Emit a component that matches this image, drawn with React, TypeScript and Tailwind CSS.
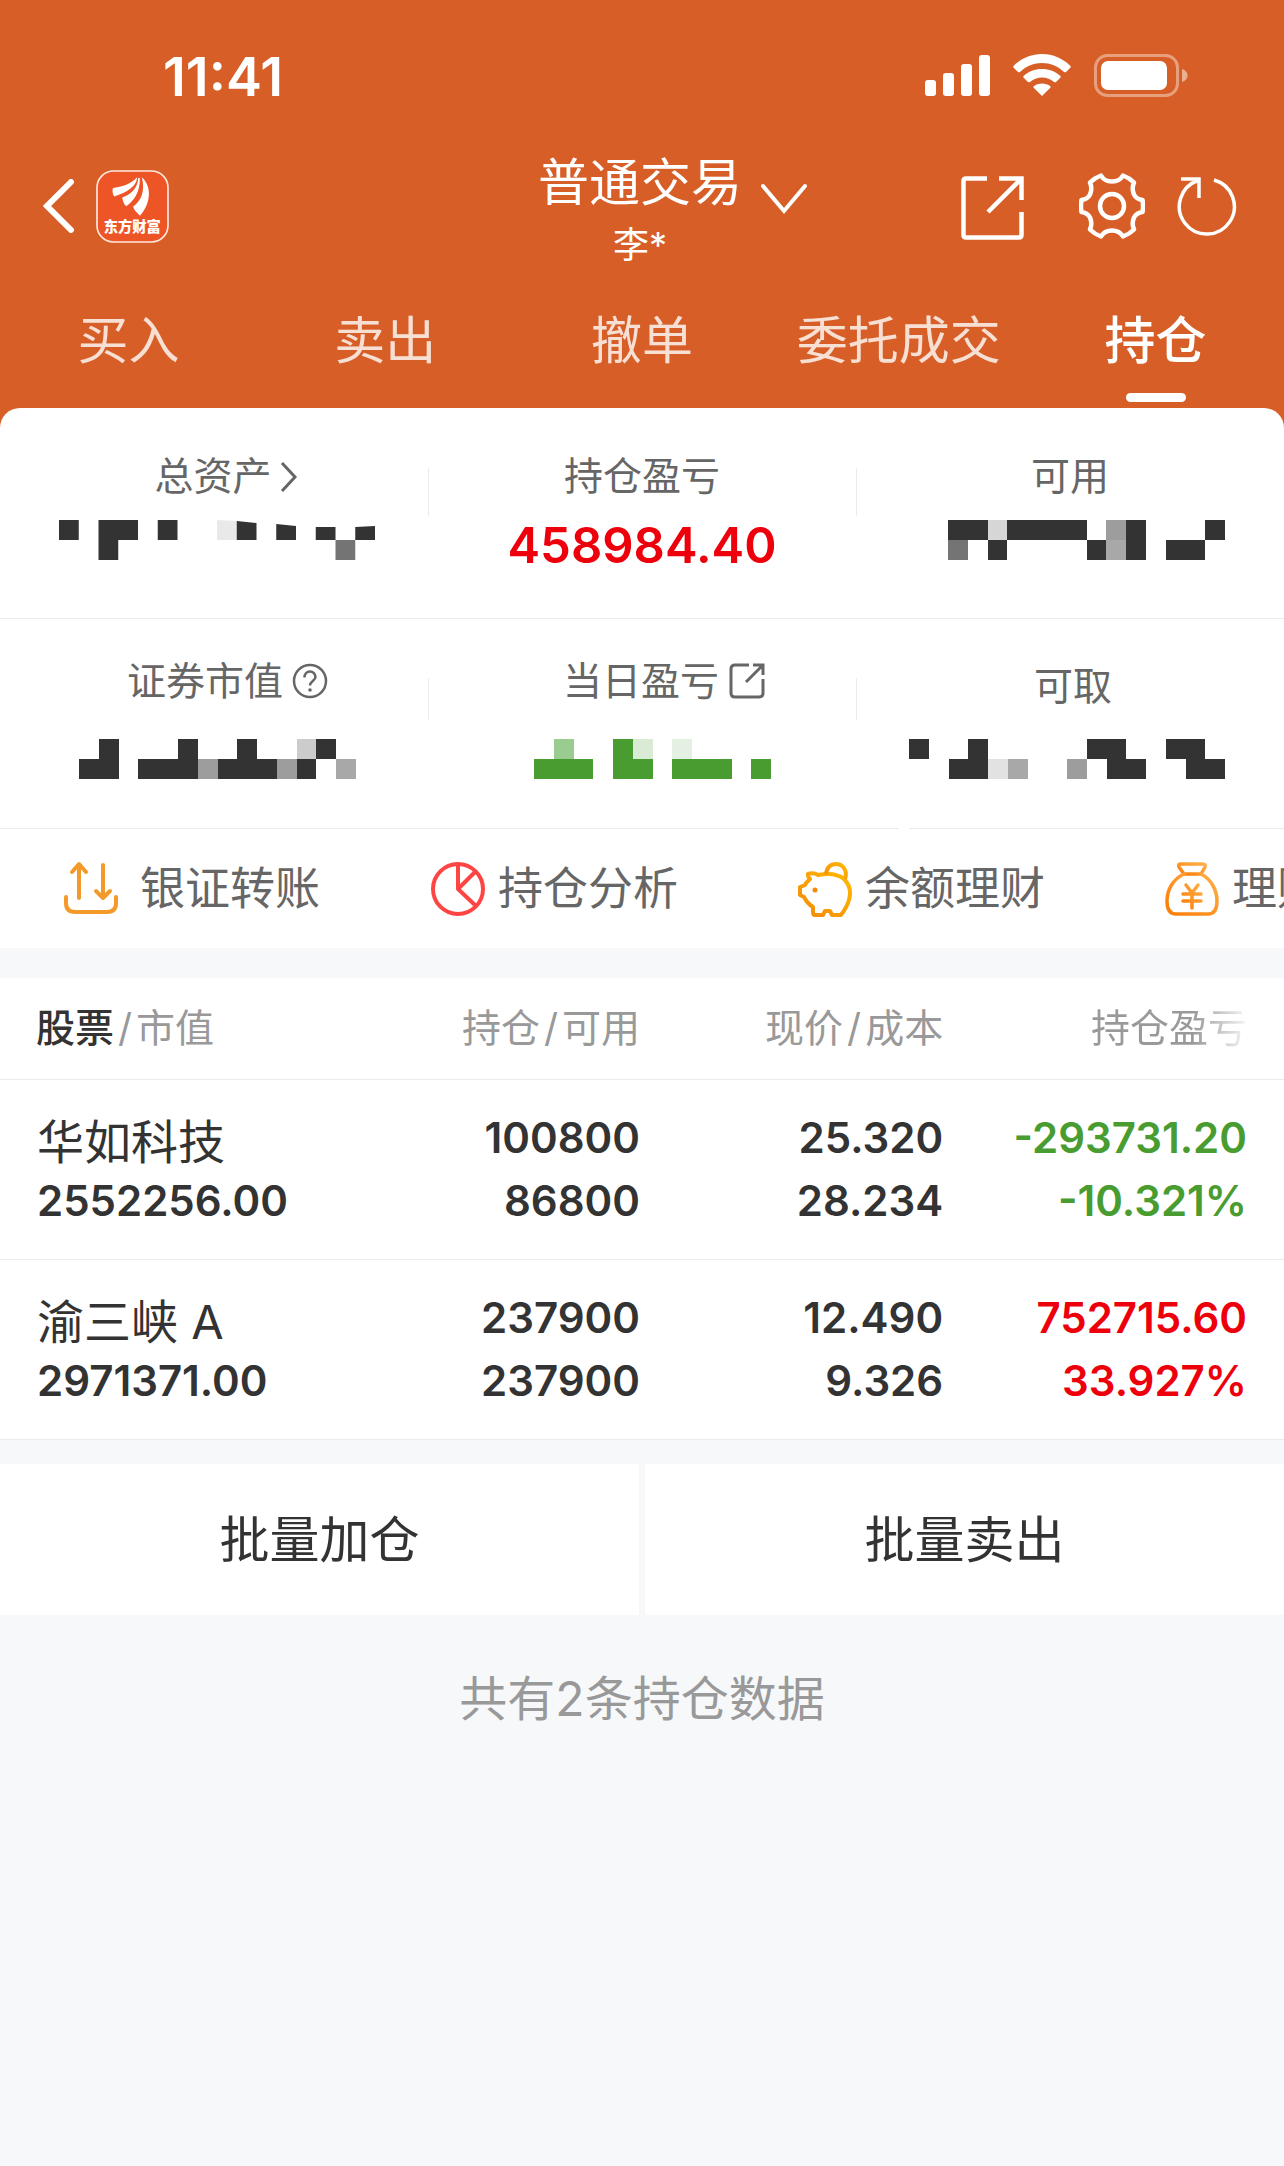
import React from "react";

type Cell = [col: number, row: number, span: number, fill: string];

const INK = "#333333";
const LEAF = "#499c2f";

function Mosaic({ cols, cells, className, label }: { cols: number; cells: Cell[]; className: string; label: string }) {
  return (
    <svg viewBox={`0 0 ${cols * 20} 40`} preserveAspectRatio="none" shapeRendering="crispEdges" role="img" aria-label={label} className={className}>
      {cells.map(([c, r, n, fill], i) => (
        <rect key={i} x={c * 20} y={r * 20} width={n * 20} height={20} fill={fill} />
      ))}
    </svg>
  );
}

function StatusBar() {
  return (
    <div className="flex h-[136px] items-center justify-between pt-[18px] pr-[96px] pl-[163px]">
      <span className="text-[54px] leading-[60px] font-semibold">11:41</span>
      <div className="mb-1 flex items-center gap-[23px]">
        <svg viewBox="0 0 65 42" className="h-[42px] w-[65px]" fill="currentColor">
          <rect x="0" y="26" width="11" height="16" rx="3" />
          <rect x="18" y="19" width="11" height="23" rx="3" />
          <rect x="36" y="10" width="11" height="32" rx="3" />
          <rect x="54" y="1" width="11" height="41" rx="3" />
        </svg>
        <svg viewBox="0 0 58 42" className="h-[42px] w-[58px]" fill="currentColor">
          <path d="M29 0C40 0 50 4.500 57.500 12Q58 13 57.500 13.500L53 18Q52 18.500 51 18C45 12 37 9 29 9S13 12 7 18Q6 18.500 5 18L.5 13.500Q0 13 .5 12C8 4.500 18 0 29 0Z" />
          <path d="M29 15C36 15 42.500 17.500 47.500 22Q48 23 47.500 23.500L43 28Q42 28.500 41 28C37.500 25 33.500 23.500 29 23.500S20.500 25 17 28Q16 28.500 15 28L10.500 23.500Q10 23 10.500 22C15.500 17.500 22 15 29 15Z" />
          <path d="M29 29.500C32 29.500 35 30.500 37.300 32.300Q38 33 37.300 33.800L29 42L20.700 33.800Q20 33 20.700 32.300C23 30.500 26 29.500 29 29.500Z" />
        </svg>
        <svg viewBox="0 0 94 43" className="h-[43px] w-[94px]">
          <rect x="1.500" y="1.500" width="82" height="40" rx="12" fill="none" stroke="#fff" strokeOpacity=".4" strokeWidth="3" />
          <rect x="7" y="7" width="66" height="29" rx="7" fill="#fff" />
          <path d="M88 15C91.500 16 93.500 18.500 93.500 21.500S91.500 27 88 28Z" fill="#fff" fillOpacity=".5" />
        </svg>
      </div>
    </div>
  );
}

function Logo() {
  return (
    <svg viewBox="48 44 220 220" className="size-[73px]" role="img" aria-label="东方财富">
      <rect x="51" y="47" width="214" height="214" rx="50" fill="#ee5526" stroke="#ffe9df" strokeWidth="5" />
      <path fill="#fff" d="M99 98C125 95 152 88 172 66C170 95 142 110 103 124C97 115 97 106 99 98Z" />
      <path fill="#fff" d="M175 68C175 98 152 118 127 127C129 139 132 147 139 153C160 138 182 112 180 67Z" />
      <path fill="#fff" d="M186 66C204 82 211 106 206 131C202 153 193 167 181 182C173 173 162 166 160 154C184 137 197 108 186 66Z" />
      <text x="157" y="231" textAnchor="middle" fontSize="43" fontWeight="900" fill="#fff" fontFamily="'Noto Sans CJK SC', sans-serif">
        东方财富
      </text>
    </svg>
  );
}

function NavBar() {
  return (
    <div className="grid h-[140px] grid-cols-[1fr_auto_1fr] items-center pr-[47px] pl-[43px]">
      <div className="flex items-center gap-[21px]">
        <button type="button" aria-label="返回">
          <svg viewBox="0 0 32 54" className="h-[54px] w-[32px]" fill="none" stroke="currentColor" strokeWidth="6" strokeLinecap="round">
            <path d="M28 3L4 27L28 51" />
          </svg>
        </button>
        <button type="button">
          <Logo />
        </button>
      </div>
      <button type="button" className="relative pt-4 text-center">
        <span className="block text-[51px] leading-[62px]">普通交易</span>
        <span className="block text-[36px] leading-[62px]">李*</span>
        <svg viewBox="0 0 46 32" className="absolute top-[47px] left-full ml-[19px] h-[32px] w-[46px]" fill="none" stroke="currentColor" strokeWidth="4" strokeLinecap="round">
          <path d="M2 3L23 28L44 3" />
        </svg>
      </button>
      <div className="flex items-center justify-end">
        <button type="button" aria-label="分享" className="mt-[3px] mr-[54px]">
          <svg viewBox="0 0 64 64" className="size-[64px]" fill="none" stroke="currentColor" strokeWidth="4.500">
            <path d="M26 2.500H5Q2.500 2.500 2.500 5V59Q2.500 61.500 5 61.500H58Q60.500 61.500 60.500 59V36" />
            <path d="M38 2.500H60.500V24M60.500 2.500L27 36" />
          </svg>
        </button>
        <button type="button" aria-label="设置" className="mr-[32px]">
          <svg viewBox="0 0 66 66" className="size-[66px]" fill="none" stroke="currentColor" strokeWidth="4.500" strokeLinejoin="round">
            <path d="M22 2.500C24 6 28 8.500 33 8.500S42 6 44 2.500C48 4 52 6.500 55 9.500C53 14 53.500 18 55 21.500C56.500 24.500 59.500 26.500 63.500 27C64.200 31 64.200 35 63.500 39C59.500 39.500 56.500 41.500 55 44.500C53.500 48 53 52 55 56.500C52 59.500 48 62 44 63.500C42 60 38 57.500 33 57.500S24 60 22 63.500C18 62 14 59.500 11 56.500C13 52 12.500 48 11 44.500C9.500 41.500 6.500 39.500 2.500 39C1.800 35 1.800 31 2.500 27C6.500 26.500 9.500 24.500 11 21.500C12.500 18 13 14 11 9.500C14 6.500 18 4 22 2.500Z" />
            <circle cx="33" cy="33" r="12" />
          </svg>
        </button>
        <button type="button" aria-label="刷新">
          <svg viewBox="0 0 60 60" className="size-[60px]" fill="none" stroke="currentColor" strokeWidth="3.500">
            <path d="M37 4A27.500 27.500 0 1 1 21 4.500" />
            <path d="M4 3H22V22" />
          </svg>
        </button>
      </div>
    </div>
  );
}

const TABS = ["买入", "卖出", "撤单", "委托成交", "持仓"];

function Tabs() {
  return (
    <nav className="grid grid-cols-5 pt-[26px]">
      {TABS.map((t) => {
        const on = t === "持仓";
        return (
          <a key={t} href="#" aria-current={on ? "page" : undefined} className={on ? "flex flex-col items-center font-medium" : "flex flex-col items-center text-white/80"}>
            <span className="text-[51px] leading-[78px] whitespace-nowrap">{t}</span>
            {on && <span className="mt-[13px] mb-[6px] h-[9px] w-[60px] rounded-full bg-white" />}
          </a>
        );
      })}
    </nav>
  );
}

const LABEL = "relative text-[39px] leading-[54px] text-[#666]";

function VLine({ className }: { className: string }) {
  return <span className={"absolute -right-px w-px bg-[#ebebeb] " + className} />;
}

function Summary() {
  return (
    <section className="bg-white">
      <div className="grid h-[211px] grid-cols-3 border-b border-[#ebebeb]">
        <div className="relative flex flex-col items-center pt-[41px]">
          <a href="#" className={LABEL + " mr-[2px]"}>
            总资产
            <svg viewBox="0 0 18 30" className="absolute top-[13px] left-full ml-[8px] h-[30px] w-[18px]" fill="none" stroke="currentColor" strokeWidth="3">
              <path d="M2 1L15 15L2 29" />
            </svg>
          </a>
          <svg viewBox="0 0 320 40" preserveAspectRatio="none" role="img" aria-label="总资产已隐藏" className="mt-[17px] ml-[6px] h-[40px] w-[316px]" fill={INK}>
            <path d="M0 0H20V20H0ZM40 0H80V20H60V40H40ZM100 0H120V20H100Z" />
            <path d="M160 0L180 1V20H160Z" fill="#e9e9e9" />
            <path d="M180 1L200 3V20H180ZM220 4L240 6V20H220ZM260 7H280V20H260ZM300 7L320 6V20H300Z" />
            <path d="M280 20H300V40H280Z" fill="#747474" />
          </svg>
          <VLine className="top-[60px] h-[48px]" />
        </div>
        <div className="relative flex flex-col items-center pt-[41px]">
          <span className={LABEL}>持仓盈亏</span>
          <span className="mt-[13px] text-[49px] leading-[60px] font-semibold text-[#ed000c]">458984.40</span>
          <VLine className="top-[60px] h-[48px]" />
        </div>
        <div className="flex flex-col items-center pt-[41px]">
          <span className={LABEL}>可用</span>
          <Mosaic
            cols={14}
            label="可用已隐藏"
            className="mt-[17px] ml-[32px] h-[40px] w-[277px]"
            cells={[
              [0, 0, 2, INK], [2, 0, 1, "#d6d6d6"], [3, 0, 4, INK], [8, 0, 1, "#9d9d9d"], [9, 0, 1, INK], [13, 0, 1, INK],
              [0, 1, 1, "#747474"], [2, 1, 1, INK], [7, 1, 1, INK], [8, 1, 1, "#a8a8a8"], [9, 1, 1, INK], [11, 1, 2, INK],
            ]}
          />
        </div>
      </div>
      <div className="grid h-[209px] grid-cols-3">
        <div className="relative flex flex-col items-center pt-[35px]">
          <button type="button" className={LABEL + " mr-[18px]"}>
            证券市值
            <svg viewBox="0 0 36 36" className="absolute top-[9px] left-full ml-[9px] size-[36px]" fill="none" stroke="currentColor" strokeWidth="2.500">
              <circle cx="18" cy="18" r="16" />
              <path d="M12.500 14.500C12.500 11 15 8.500 18 8.500S23.500 11 23.500 14C23.500 17.500 18 18 18 22.500" />
              <circle cx="18" cy="27" r="1.800" fill="currentColor" stroke="none" />
            </svg>
          </button>
          <Mosaic
            cols={14}
            label="证券市值已隐藏"
            className="mt-[31px] ml-[6px] h-[40px] w-[277px]"
            cells={[
              [1, 0, 1, INK], [5, 0, 1, INK], [8, 0, 1, INK], [11, 0, 1, "#cccccc"], [12, 0, 1, INK],
              [0, 1, 2, INK], [3, 1, 3, INK], [6, 1, 1, "#9d9d9d"], [7, 1, 3, INK], [10, 1, 1, "#9d9d9d"], [11, 1, 1, INK], [13, 1, 1, "#a8a8a8"],
            ]}
          />
          <VLine className="top-[59px] h-[42px]" />
        </div>
        <div className="relative flex flex-col items-center pt-[35px]">
          <a href="#" className={LABEL + " mr-[2px]"}>
            当日盈亏
            <svg viewBox="0 0 36 36" className="absolute top-[9px] left-full ml-[10px] size-[36px]" fill="none" stroke="currentColor" strokeWidth="3">
              <path d="M20 2H6Q2 2 2 6V30Q2 34 6 34H30Q34 34 34 30V16" />
              <path d="M24 2H34V12M34 2L17 19" />
            </svg>
          </a>
          <Mosaic
            cols={12}
            label="当日盈亏已隐藏"
            className="mt-[31px] ml-[20px] h-[40px] w-[237px]"
            cells={[
              [1, 0, 1, "#9bcc8f"], [4, 0, 1, LEAF], [5, 0, 1, "#d9ead5"], [7, 0, 1, "#e4f0e1"],
              [0, 1, 3, LEAF], [4, 1, 2, LEAF], [7, 1, 3, LEAF], [11, 1, 1, LEAF],
            ]}
          />
          <VLine className="top-[59px] h-[42px]" />
        </div>
        <div className="flex flex-col items-center pt-[40px]">
          <span className={LABEL + " ml-[6px]"}>可取</span>
          <Mosaic
            cols={16}
            label="可取已隐藏"
            className="mt-[26px] mr-[6px] h-[40px] w-[316px]"
            cells={[
              [0, 0, 1, INK], [3, 0, 1, INK], [9, 0, 2, INK], [13, 0, 2, INK],
              [2, 1, 2, INK], [4, 1, 1, "#e2e2e2"], [5, 1, 1, "#a8a8a8"], [8, 1, 1, "#9d9d9d"], [10, 1, 2, INK], [14, 1, 2, INK],
            ]}
          />
        </div>
      </div>
      <div className="flex gap-[10px]">
        <span className="h-px w-[70%] bg-[#ebebeb]" />
        <span className="h-px flex-1 bg-[#ebebeb]" />
      </div>
    </section>
  );
}

function QuickActions() {
  const item = "flex w-[367px] shrink-0 items-center text-[45px] leading-[60px] text-[#666] whitespace-nowrap";
  return (
    <nav className="flex h-[119px] overflow-hidden bg-white pl-[63px]">
      <a href="#" className={item}>
        <svg viewBox="0 0 56 56" className="mr-[21px] size-[56px]" fill="none" stroke="#f39a2b" strokeWidth="4" strokeLinecap="round" strokeLinejoin="round">
          <path d="M3 36V42Q3 51 12 51H44Q53 51 53 42V36" />
          <path d="M16 37V4M9 11L16 3L23 11M40 4V37M33 30L40 37L47 30" />
        </svg>
        银证转账
      </a>
      <a href="#" className={item}>
        <svg viewBox="0 0 56 56" className="mr-[12px] size-[56px]" fill="none" stroke="#ff4444" strokeWidth="4" strokeLinejoin="round">
          <circle cx="28" cy="28" r="25" />
          <path d="M28 3V28L46 10M28 28L46 45" />
        </svg>
        持仓分析
      </a>
      <a href="#" className={item}>
        <svg viewBox="0 0 56 56" className="mr-[12px] size-[56px]" fill="none" stroke="url(#pig)" strokeWidth="4" strokeLinejoin="round">
          <defs>
            <linearGradient id="pig" x1="1" y1="0" x2="0" y2="1">
              <stop offset="0" stopColor="#ffb800" />
              <stop offset="1" stopColor="#f58a0a" />
            </linearGradient>
          </defs>
          <path d="M11 13C14 12 18 12 21 14C31 12 41 13 47 18C53 24 54 32 52 39C50 46 47 50 44 54H35L33 50H28L26 54H18Q16 54 16 51V46C11 43 9 40 7 36L3 34V26L8 24C9 21 11 20 13 18C11 16 10.500 15 11 13Z" />
          <path d="M29 13C30 6 34 3 39 3C46 3 51 10 48 18" />
          <circle cx="18" cy="29" r="2.500" fill="#f58a0a" stroke="none" />
        </svg>
        余额理财
      </a>
      <a href="#" className={item}>
        <svg viewBox="0 0 56 56" className="mr-[12px] size-[56px]" fill="none" stroke="url(#bag)" strokeWidth="3.500" strokeLinecap="round" strokeLinejoin="round">
          <defs>
            <linearGradient id="bag" x1="1" y1="0" x2="0" y2="1">
              <stop offset="0" stopColor="#ffb04a" />
              <stop offset="1" stopColor="#fb7c05" />
            </linearGradient>
          </defs>
          <path d="M16 3H39Q42 3 41 6L37 13H20L15 6Q14 3 16 3Z" />
          <path d="M20 13C9 18 3 29 3 40Q3 53 12 53H44Q53 53 53 40C53 29 47 18 37 13" />
          <path d="M22 24L28 32L34 24M19 33H37M19 40H37M28 32V47" />
        </svg>
        理财
      </a>
    </nav>
  );
}

const ROWS = [
  { name: "华如科技", value: "2552256.00", held: "100800", free: "86800", price: "25.320", cost: "28.234", pnl: "-293731.20", pct: "-10.321%", tone: "text-[#499c2f]" },
  { name: "渝三峡 A", value: "2971371.00", held: "237900", free: "237900", price: "12.490", cost: "9.326", pnl: "752715.60", pct: "33.927%", tone: "text-[#ed000c]" },
];

function Slash() {
  return <span className="mx-1">/</span>;
}

function Holdings() {
  const line = "block text-[42px] leading-[63px]";
  return (
    <table className="w-full table-fixed border-collapse bg-white text-right text-[#333]">
      <thead>
        <tr className="h-[101px] border-b border-[#ebebeb] text-[39px] text-[#999]">
          <th scope="col" className="w-[26%] pl-[36px] text-left font-normal">
            <span className="font-medium text-[#333]">股票</span>
            <Slash />
            市值
          </th>
          <th scope="col" className="w-[24%] pr-[2px] font-normal">
            持仓
            <Slash />
            可用
          </th>
          <th scope="col" className="w-[24%] pr-[7px] font-normal">
            现价
            <Slash />
            成本
          </th>
          <th scope="col" className="pr-[37px] font-normal">
            <span className="bg-linear-to-r from-[#999] from-65% to-[#999]/10 bg-clip-text text-transparent">持仓盈亏</span>
          </th>
        </tr>
      </thead>
      <tbody className="font-semibold">
        {ROWS.map((r) => (
          <tr key={r.name} className="h-[180px] border-b border-[#ebebeb]">
            <td className="pl-[37px] text-left">
              <span className="block pt-[8px] text-[47px] leading-[55px] font-normal">{r.name}</span>
              <span className={line}>{r.value}</span>
            </td>
            <td className="pr-[2px]">
              <span className={line}>{r.held}</span>
              <span className={line}>{r.free}</span>
            </td>
            <td className="pr-[7px]">
              <span className={line}>{r.price}</span>
              <span className={line}>{r.cost}</span>
            </td>
            <td className={"pr-[37px] " + r.tone}>
              <span className={line}>{r.pnl}</span>
              <span className={line}>{r.pct}</span>
            </td>
          </tr>
        ))}
      </tbody>
    </table>
  );
}

export default function App() {
  return (
    <main className="min-h-screen overflow-x-hidden bg-[#f7f8fa] font-['Inter','Noto_Sans_CJK_SC',sans-serif]">
      <header className="bg-[#d75f27] text-white">
        <StatusBar />
        <NavBar />
        <Tabs />
      </header>
      <div className="bg-[#d75f27]">
        <div className="overflow-hidden rounded-t-[20px] bg-white">
          <Summary />
        </div>
      </div>
      <QuickActions />
      <div className="mt-[30px]">
        <Holdings />
      </div>
      <div className="mt-[24px] grid grid-cols-2 gap-[6px] text-[50px] text-[#333]">
        <button type="button" className="h-[151px] bg-white pt-[3px]">批量加仓</button>
        <button type="button" className="h-[151px] bg-white pt-[3px]">批量卖出</button>
      </div>
      <p className="py-[52px] text-center text-[48px] leading-[64px] text-[#999]">共有2条持仓数据</p>
    </main>
  );
}
